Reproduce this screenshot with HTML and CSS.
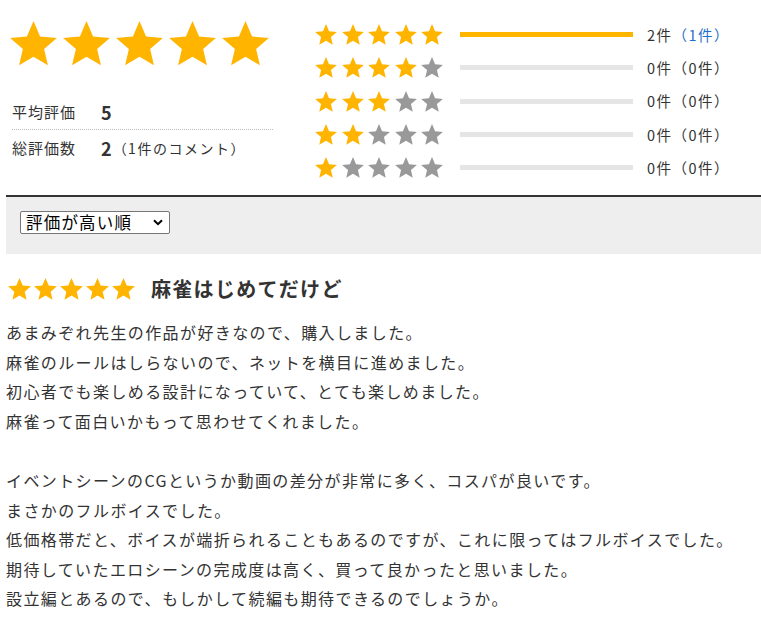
FILE: index.html
```html
<!DOCTYPE html>
<html lang="ja">
<head>
<meta charset="utf-8">
<title>レビュー</title>
<link rel="stylesheet" href="styles.css">
</head>
<body>
<svg class="defs" width="0" height="0" aria-hidden="true">
  <defs>
    <symbol id="star" viewBox="2 2 20 19.27">
      <path d="M12 17.27L18.18 21l-1.64-7.03L22 9.24l-7.19-.61L12 2 9.19 8.63 2 9.24l5.46 4.73L5.82 21z"/>
    </symbol>
  </defs>
</svg>
<div class="page">
  <section class="summary">
    <div class="summary-left">
      <div class="big-stars">
        <svg class="star on"><use href="#star"/></svg>
        <svg class="star on"><use href="#star"/></svg>
        <svg class="star on"><use href="#star"/></svg>
        <svg class="star on"><use href="#star"/></svg>
        <svg class="star on"><use href="#star"/></svg>
      </div>
      <div class="meta">
        <div class="meta-row sep">
          <span class="meta-label">平均評価</span>
          <span class="meta-value">5</span>
        </div>
        <div class="meta-row">
          <span class="meta-label">総評価数</span>
          <span class="meta-value">2</span><span class="meta-note">（1件のコメント）</span>
        </div>
      </div>
    </div>
    <div class="summary-right">
      <div class="dist-row">
        <div class="small-stars">
          <svg class="star on"><use href="#star"/></svg><svg class="star on"><use href="#star"/></svg><svg class="star on"><use href="#star"/></svg><svg class="star on"><use href="#star"/></svg><svg class="star on"><use href="#star"/></svg>
        </div>
        <div class="bar"><div class="bar-fill" style="width:100%"></div></div>
        <div class="count">2件<span class="link">（1件）</span></div>
      </div>
      <div class="dist-row">
        <div class="small-stars">
          <svg class="star on"><use href="#star"/></svg><svg class="star on"><use href="#star"/></svg><svg class="star on"><use href="#star"/></svg><svg class="star on"><use href="#star"/></svg><svg class="star off"><use href="#star"/></svg>
        </div>
        <div class="bar"><div class="bar-fill" style="width:0%"></div></div>
        <div class="count">0件（0件）</div>
      </div>
      <div class="dist-row">
        <div class="small-stars">
          <svg class="star on"><use href="#star"/></svg><svg class="star on"><use href="#star"/></svg><svg class="star on"><use href="#star"/></svg><svg class="star off"><use href="#star"/></svg><svg class="star off"><use href="#star"/></svg>
        </div>
        <div class="bar"><div class="bar-fill" style="width:0%"></div></div>
        <div class="count">0件（0件）</div>
      </div>
      <div class="dist-row">
        <div class="small-stars">
          <svg class="star on"><use href="#star"/></svg><svg class="star on"><use href="#star"/></svg><svg class="star off"><use href="#star"/></svg><svg class="star off"><use href="#star"/></svg><svg class="star off"><use href="#star"/></svg>
        </div>
        <div class="bar"><div class="bar-fill" style="width:0%"></div></div>
        <div class="count">0件（0件）</div>
      </div>
      <div class="dist-row">
        <div class="small-stars">
          <svg class="star on"><use href="#star"/></svg><svg class="star off"><use href="#star"/></svg><svg class="star off"><use href="#star"/></svg><svg class="star off"><use href="#star"/></svg><svg class="star off"><use href="#star"/></svg>
        </div>
        <div class="bar"><div class="bar-fill" style="width:0%"></div></div>
        <div class="count">0件（0件）</div>
      </div>
    </div>
  </section>

  <div class="sort-box">
    <div class="select-wrap">
      <select class="sort-select">
        <option>評価が高い順</option>
        <option>評価が低い順</option>
        <option>新しい順</option>
      </select>
      <svg class="chevron" viewBox="0 0 10 7" aria-hidden="true"><path d="M1 1.2l4 4 4-4" fill="none" stroke="#000" stroke-width="2"/></svg>
    </div>
  </div>

  <article class="review">
    <header class="review-head">
      <div class="review-stars">
        <svg class="star on"><use href="#star"/></svg><svg class="star on"><use href="#star"/></svg><svg class="star on"><use href="#star"/></svg><svg class="star on"><use href="#star"/></svg><svg class="star on"><use href="#star"/></svg>
      </div>
      <h2 class="review-title">麻雀はじめてだけど</h2>
    </header>
    <p class="review-body">あまみぞれ先生の作品が好きなので、購入しました。<br>麻雀のルールはしらないので、ネットを横目に進めました。<br>初心者でも楽しめる設計になっていて、とても楽しめました。<br>麻雀って面白いかもって思わせてくれました。<br><br>イベントシーンのCGというか動画の差分が非常に多く、コスパが良いです。<br>まさかのフルボイスでした。<br>低価格帯だと、ボイスが端折られることもあるのですが、これに限ってはフルボイスでした。<br>期待していたエロシーンの完成度は高く、買って良かったと思いました。<br>設立編とあるので、もしかして続編も期待できるのでしょうか。</p>
  </article>
</div>
</body>
</html>
```

FILE: styles.css
```css
* { box-sizing: border-box; }

html, body {
  margin: 0;
  padding: 0;
  background: #fff;
}

body {
  font-family: "Noto Sans CJK JP", "Noto Sans", sans-serif;
  color: #333;
  overflow: hidden;
}

.defs {
  position: absolute;
  width: 0;
  height: 0;
}

.page {
  padding-left: 6px;
}

.star.on { fill: #ffb400; }
.star.off { fill: #999999; }

/* summary */
.summary {
  display: flex;
  height: 195px;
}

.summary-left {
  width: 309px;
  padding-top: 21px;
}

.big-stars {
  display: flex;
  gap: 6px;
  padding-left: 4px;
}

.big-stars .star {
  width: 47px;
  height: 45px;
}

.meta {
  margin-top: 28px;
  margin-left: 6px;
  width: 261px;
}

.meta-row {
  display: flex;
  align-items: center;
  height: 36px;
}

.meta-row.sep {
  border-bottom: 1px dotted #bbb;
}

.meta-label {
  width: 89px;
  font-size: 15px;
  letter-spacing: 1px;
  line-height: 20px;
}

.meta-value {
  font-size: 18px;
  font-weight: bold;
  line-height: 20px;
}

.meta-note {
  font-size: 14px;
  letter-spacing: 1.5px;
  line-height: 20px;
  margin-left: 1px;
}

.summary-right {
  padding-top: 18px;
}

.dist-row {
  display: flex;
  align-items: center;
  height: 33.3px;
}

.small-stars {
  display: flex;
  gap: 4.5px;
}

.small-stars .star {
  width: 22px;
  height: 21px;
}

.bar {
  width: 173px;
  height: 5px;
  margin-left: 17px;
  background: #e5e5e5;
}

.bar-fill {
  height: 100%;
  background: #ffb400;
}

.count {
  margin-left: 14px;
  font-size: 14.5px;
  letter-spacing: 1.5px;
  line-height: 20px;
}

.link {
  color: #1e6fc8;
}

/* sort */
.sort-box {
  border-top: 2px solid #333;
  background: #eeeeee;
  height: 59px;
  padding: 14px 0 0 14px;
}

.select-wrap {
  position: relative;
  width: 150px;
  height: 23px;
}

.sort-select {
  -webkit-appearance: none;
  appearance: none;
  display: block;
  width: 150px;
  height: 23px;
  font-family: "Noto Sans CJK JP", sans-serif;
  font-size: 16.5px;
  letter-spacing: 1.2px;
  line-height: 21px;
  color: #000;
  padding: 0 0 0 5px;
  border: 1px solid #767676;
  border-radius: 2px;
  background-color: #fff;
}

.chevron {
  position: absolute;
  right: 7px;
  top: 8px;
  width: 10px;
  height: 7px;
  pointer-events: none;
}

/* review */
.review {
  padding-top: 23px;
}

.review-head {
  display: flex;
  align-items: center;
  height: 24px;
}

.review-stars {
  display: flex;
  gap: 3px;
  padding-left: 2px;
}

.review-stars .star {
  width: 23px;
  height: 22px;
}

.review-title {
  margin: 0 0 0 16px;
  font-size: 20px;
  letter-spacing: 1.3px;
  font-weight: bold;
  line-height: 24px;
  color: #333;
}

.review-body {
  margin: 17px 0 0 0;
  font-size: 16px;
  letter-spacing: 1.4px;
  line-height: 29.6px;
  color: #333;
}
```
